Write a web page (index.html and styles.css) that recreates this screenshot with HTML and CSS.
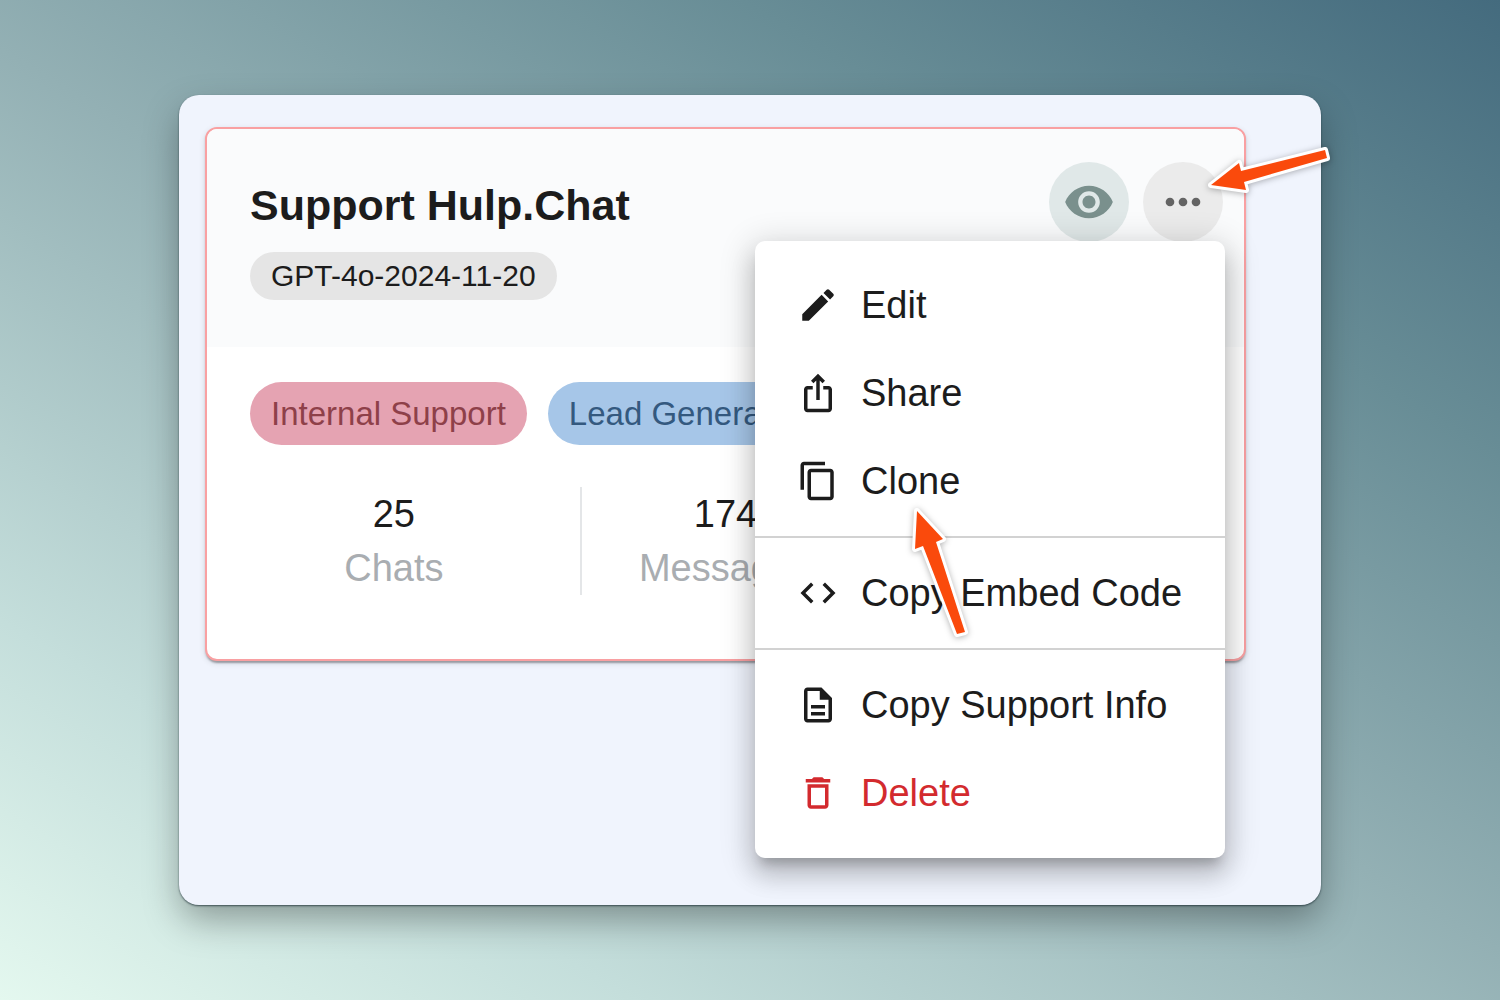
FILE: index.html
```html
<!DOCTYPE html>
<html lang="en">
<head>
<meta charset="utf-8">
<meta name="viewport" content="width=device-width, initial-scale=1">
<title>Support Hulp.Chat</title>
<link rel="stylesheet" href="styles.css">
</head>
<body>
<main class="panel">
  <article class="card">
    <header class="card-header">
      <div class="heading">
        <h1 class="title">Support Hulp.Chat</h1>
        <span class="model">GPT-4o-2024-11-20</span>
      </div>
      <div class="actions">
        <button class="round round-view" type="button" aria-label="View">
          <svg class="round-icon" viewBox="0 0 24 24"><path d="M12 4.500C7 4.500 2.730 7.610 1 12c1.730 4.390 6 7.500 11 7.500s9.270-3.110 11-7.500c-1.730-4.390-6-7.500-11-7.500zM12 17c-2.760 0-5-2.240-5-5s2.240-5 5-5 5 2.240 5 5-2.240 5-5 5zm0-8c-1.660 0-3 1.340-3 3s1.340 3 3 3 3-1.340 3-3-1.340-3-3-3z"/></svg>
        </button>
        <button class="round round-more" type="button" aria-label="More" aria-haspopup="menu" aria-expanded="true">
          <svg class="round-icon" viewBox="0 0 24 24"><circle cx="6" cy="12" r="2"/><circle cx="12" cy="12" r="2"/><circle cx="18" cy="12" r="2"/></svg>
        </button>
        <div class="menu" role="menu">
          <button class="item" type="button" role="menuitem">
            <svg class="icon" viewBox="0 0 24 24"><path d="M3 17.250V21h3.750L17.810 9.940l-3.750-3.750L3 17.250zM20.710 7.040c.39-.39.39-1.020 0-1.410l-2.340-2.340c-.39-.39-1.020-.39-1.410 0l-1.830 1.830 3.750 3.750 1.830-1.830z"/></svg>
            Edit
          </button>
          <button class="item" type="button" role="menuitem">
            <svg class="icon" viewBox="0 0 24 24"><path d="m16 5-1.420 1.420-1.590-1.590V16h-1.980V4.830L9.420 6.420 8 5l4-4 4 4zm4 5v11c0 1.100-.9 2-2 2H6c-1.110 0-2-.9-2-2V10c0-1.110.89-2 2-2h3v2H6v11h12V10h-3V8h3c1.100 0 2 .89 2 2z"/></svg>
            Share
          </button>
          <button class="item" type="button" role="menuitem">
            <svg class="icon" viewBox="0 0 24 24"><path d="M16 1H4c-1.100 0-2 .9-2 2v14h2V3h12V1zm3 4H8c-1.100 0-2 .9-2 2v14c0 1.100.9 2 2 2h11c1.100 0 2-.9 2-2V7c0-1.100-.9-2-2-2zm0 16H8V7h11v14z"/></svg>
            Clone
          </button>
          <hr class="rule">
          <button class="item" type="button" role="menuitem">
            <svg class="icon" viewBox="0 0 24 24"><path d="M9.400 16.600 4.800 12l4.600-4.600L8 6l-6 6 6 6 1.400-1.400zm5.200 0 4.600-4.600-4.600-4.600L16 6l6 6-6 6-1.400-1.400z"/></svg>
            Copy Embed Code
          </button>
          <hr class="rule">
          <button class="item" type="button" role="menuitem">
            <svg class="icon" viewBox="0 0 24 24"><path d="M8 16h8v2H8zm0-4h8v2H8zm6-10H6c-1.100 0-2 .9-2 2v16c0 1.100.89 2 1.990 2H18c1.100 0 2-.9 2-2V8l-6-6zm4 18H6V4h7v5h5v11z"/></svg>
            Copy Support Info
          </button>
          <button class="item item-danger" type="button" role="menuitem">
            <svg class="icon" viewBox="0 0 24 24"><path d="M6 19c0 1.100.9 2 2 2h8c1.100 0 2-.9 2-2V7H6v12zM8 9h8v10H8V9zm7.500-5-1-1h-5l-1 1H5v2h14V4z"/></svg>
            Delete
          </button>
          <svg class="arrow arrow-clone" viewBox="910 505 60 136" aria-hidden="true"><path d="M917 511 943 539 936 542 965 632 957 634 923 546 915 549z"/></svg>
        </div>
      </div>
    </header>
    <div class="card-body">
      <div class="tags">
        <span class="tag tag-rose">Internal Support</span>
        <span class="tag tag-blue">Lead Generation</span>
      </div>
      <div class="stats">
        <div class="stat"><span class="value">25</span><span class="label">Chats</span></div>
        <div class="stat"><span class="value">174</span><span class="label">Messages</span></div>
      </div>
    </div>
  </article>
  <svg class="arrow arrow-more" viewBox="1204 143 130 54" aria-hidden="true"><path d="M1211 185 1239 163 1241 171 1325 150 1327 158 1244 182 1246 190z"/></svg>
</main>
</body>
</html>
```
FILE: styles.css
```css
* { box-sizing: border-box; }

body {
  margin: 0;
  min-height: 100vh;
  display: flex;
  padding: 95px 179px;
  font-family: "Liberation Sans", Arial, sans-serif;
  color: #1c1c1c;
  background: linear-gradient(31deg, #e4f8ef 0%, #c4dedb 20%, #93b0b4 50%, #688d96 76%, #446b7e 100%);
}

button { border: 0; padding: 0; font: inherit; color: inherit; cursor: pointer; }

.panel {
  position: relative;
  flex: 1;
  padding: 32px 75px 32px 26px;
  border-radius: 20px;
  background: #f0f4fd;
  box-shadow: 0 1px 2px rgba(20, 40, 45, .7), 0 16px 36px -2px rgba(0, 0, 0, .34);
}

.card {
  border: 2px solid #f9a0a2;
  border-radius: 12px;
  background: #fff;
  box-shadow: 0 4px 2px -2px rgba(0, 0, 0, .2), 0 2px 2px rgba(0, 0, 0, .14), 0 2px 6px rgba(0, 0, 0, .12);
}

.card-header {
  display: flex;
  justify-content: space-between;
  align-items: flex-start;
  padding: 33px 21px 47px 43px;
  border-radius: 10px 10px 0 0;
  background: #fafbfc;
}

.heading {
  display: flex;
  flex-direction: column;
  align-items: flex-start;
  gap: 17px;
  padding-top: 13px;
}

.title { margin: 0; font-size: 43px; line-height: 60px; font-weight: 700; }

.model {
  padding: 0 21px;
  border-radius: 24px;
  font-size: 30px;
  line-height: 48px;
  background: #e5e5e5;
}

.actions { position: relative; display: flex; gap: 14px; }

.round {
  display: grid;
  place-items: center;
  width: 80px;
  height: 80px;
  border-radius: 50%;
}

.round-view { background: #e0e8e8; color: #7a908d; }
.round-more { background: #ebebeb; color: #646464; }
.round-icon { width: 52px; height: 52px; fill: currentColor; }

.menu {
  position: absolute;
  z-index: 1;
  top: calc(100% - 1px);
  right: -2px;
  width: 470px;
  padding: 20px 0 21px;
  border-radius: 10px;
  background: #fff;
  box-shadow: 0 11px 11px -6px rgba(0, 0, 0, .2), 0 17px 24px 2px rgba(0, 0, 0, .14), 0 6px 32px 6px rgba(0, 0, 0, .14);
}

.item {
  display: flex;
  align-items: center;
  gap: 22px;
  width: 100%;
  height: 88px;
  padding: 0 42px;
  font-size: 38px;
  white-space: nowrap;
  background: none;
}

.item-danger { color: #d32a2e; }
.icon { flex: none; width: 42px; height: 42px; fill: currentColor; }
.rule { height: 2px; margin: 11px 0; border: 0; background: #d2d2d2; }

.card-body { padding: 35px 43px 64px; }
.tags { display: flex; gap: 21px; }

.tag {
  padding: 0 21px;
  border-radius: 32px;
  font-size: 33px;
  line-height: 63px;
  white-space: nowrap;
}

.tag-rose { background: #e5a3b2; color: #8e4049; }
.tag-blue { background: #a6c6e8; color: #34597f; }

.stats {
  display: grid;
  grid-template-columns: repeat(3, 1fr);
  gap: 44px;
  margin-top: 42px;
}

.stat { position: relative; display: flex; flex-direction: column; align-items: center; }
.stat + .stat { box-shadow: -2px 0 #e4e6e8; }
.value, .label { font-size: 38px; line-height: 54px; }
.label { color: #a9adb1; }

.arrow {
  position: absolute;
  z-index: 2;
  fill: #fa4a0c;
  stroke: #fff;
  stroke-width: 6px;
  stroke-linejoin: round;
  paint-order: stroke;
  filter: drop-shadow(0 1px 3px rgba(0, 0, 0, .3));
  pointer-events: none;
}

.arrow-more { top: 48px; right: -13px; width: 130px; height: 54px; }
.arrow-clone { top: 264px; left: 155px; width: 60px; height: 136px; }
```
